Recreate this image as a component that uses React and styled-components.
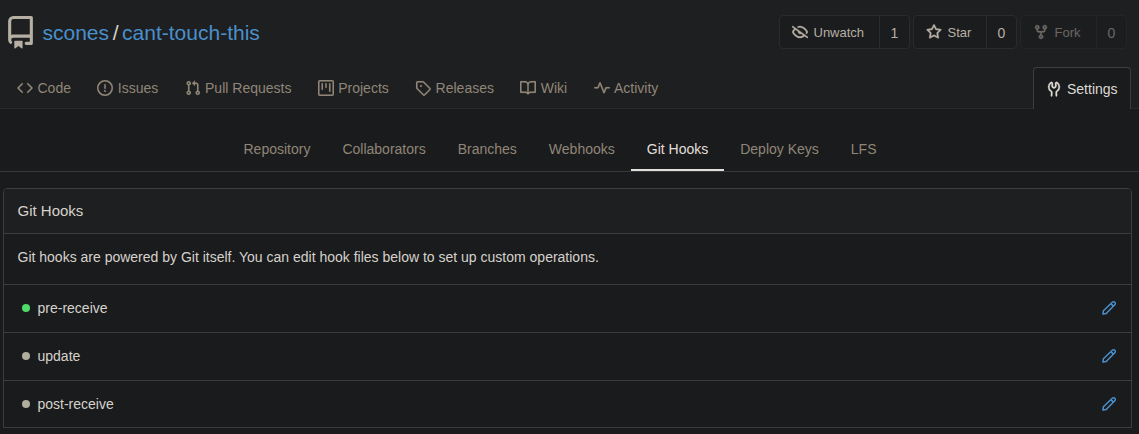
import React from 'react';
import styled, { createGlobalStyle } from 'styled-components';

const GlobalStyle = createGlobalStyle`
  * { box-sizing: border-box; }
  body {
    margin: 0;
    background: #1a1b1d;
    color: #d6d2cb;
    font-family: "Liberation Sans", Arial, sans-serif;
    font-size: 14px;
    line-height: 20px;
    overflow: hidden;
  }
`;

const paths = {
  repo: 'M2 2.5A2.5 2.5 0 014.5 0h8.75a.75.75 0 01.75.75v12.5a.75.75 0 01-.75.75h-2.5a.75.75 0 110-1.5h1.75v-2h-8a1 1 0 00-.714 1.7.75.75 0 01-1.072 1.05A2.495 2.495 0 012 11.5v-9zm10.5-1V9h-8c-.356 0-.694.074-1 .208V2.5a1 1 0 011-1h8zM5 12.25v3.25a.25.25 0 00.4.2l1.45-1.087a.25.25 0 01.3 0L8.6 15.7a.25.25 0 00.4-.2v-3.25a.25.25 0 00-.25-.25h-3.5a.25.25 0 00-.25.25z',
  code: 'M4.72 3.22a.75.75 0 011.06 1.06L2.06 8l3.72 3.72a.75.75 0 11-1.06 1.06L.47 8.53a.75.75 0 010-1.06l4.25-4.25zm6.56 0a.75.75 0 10-1.06 1.06L13.94 8l-3.72 3.72a.75.75 0 101.06 1.06l4.25-4.25a.75.75 0 000-1.06l-4.25-4.25z',
  issue: 'M8 1.5a6.5 6.5 0 100 13 6.5 6.5 0 000-13zM0 8a8 8 0 1116 0A8 8 0 010 8zm9 3a1 1 0 11-2 0 1 1 0 012 0zm-.25-6.25a.75.75 0 00-1.5 0v3.5a.75.75 0 001.5 0v-3.5z',
  pull: 'M7.177 3.073L9.573.677A.25.25 0 0110 .854v4.792a.25.25 0 01-.427.177L7.177 3.427a.25.25 0 010-.354zM3.75 2.5a.75.75 0 100 1.5.75.75 0 000-1.5zm-2.25.75a2.25 2.25 0 113 2.122v5.256a2.251 2.251 0 11-1.5 0V5.372A2.25 2.25 0 011.5 3.25zM11 2.5h-1V4h1a1 1 0 011 1v5.628a2.251 2.251 0 101.5 0V5A2.5 2.5 0 0011 2.5zm1 10.25a.75.75 0 111.5 0 .75.75 0 01-1.5 0zM3.75 12a.75.75 0 100 1.5.75.75 0 000-1.5z',
  project: 'M1.75 0A1.75 1.75 0 000 1.75v12.5C0 15.216.784 16 1.75 16h12.5A1.75 1.75 0 0016 14.25V1.75A1.75 1.75 0 0014.25 0H1.75zM1.5 1.75a.25.25 0 01.25-.25h12.5a.25.25 0 01.25.25v12.5a.25.25 0 01-.25.25H1.75a.25.25 0 01-.25-.25V1.75zM11.75 3a.75.75 0 00-.75.75v7.5a.75.75 0 001.5 0v-7.5a.75.75 0 00-.75-.75zm-8.25.75a.75.75 0 011.5 0v5.5a.75.75 0 01-1.5 0v-5.5zM8 3a.75.75 0 00-.75.75v3.5a.75.75 0 001.5 0v-3.5A.75.75 0 008 3z',
  tag: 'M2.5 7.775V2.75a.25.25 0 01.25-.25h5.025a.25.25 0 01.177.073l6.25 6.25a.25.25 0 010 .354l-5.025 5.025a.25.25 0 01-.354 0l-6.25-6.25a.25.25 0 01-.073-.177zm-1.5 0V2.75C1 1.784 1.784 1 2.75 1h5.025c.464 0 .91.184 1.238.513l6.25 6.25a1.75 1.75 0 010 2.474l-5.026 5.026a1.75 1.75 0 01-2.474 0l-6.25-6.25A1.75 1.75 0 011 7.775zM6 5a1 1 0 100 2 1 1 0 000-2z',
  book: 'M0 1.75A.75.75 0 01.75 1h4.253c1.227 0 2.317.59 3 1.501A3.744 3.744 0 0111.006 1h4.245a.75.75 0 01.75.75v10.5a.75.75 0 01-.75.75h-4.507a2.25 2.25 0 00-1.591.659l-.622.621a.75.75 0 01-1.06 0l-.622-.621A2.25 2.25 0 005.258 13H.75a.75.75 0 01-.75-.75V1.75zm8.755 3a2.25 2.25 0 012.25-2.25H14.5v9h-3.757c-.71 0-1.4.201-1.992.572l.004-7.322zm-1.504 7.324l.004-5.073-.002-2.253A2.25 2.25 0 005.003 2.5H1.5v9h3.757a3.75 3.75 0 011.994.574z',
  pulse: 'M6 2a.75.75 0 01.696.471L10 10.731l1.304-3.26A.75.75 0 0112 7h3.25a.75.75 0 010 1.5h-2.742l-1.812 4.528a.75.75 0 01-1.392 0L6 4.77 4.696 8.03A.75.75 0 014 8.5H.75a.75.75 0 010-1.5h2.742l1.812-4.529A.75.75 0 016 2z',
  tools: 'M5.433 2.304A4.494 4.494 0 003.5 6c0 1.598.832 3.002 2.09 3.802.518.328.929.923.902 1.64v.008l-.164 3.337a.75.75 0 11-1.498-.073l.163-3.33c.002-.085-.05-.216-.207-.316A5.996 5.996 0 012 6a5.994 5.994 0 012.567-4.92 1.482 1.482 0 011.673-.04c.462.296.76.827.76 1.423v2.82c0 .082.041.16.11.206l.75.51a.25.25 0 00.28 0l.75-.51A.25.25 0 009 5.282V2.463c0-.596.298-1.127.76-1.423a1.482 1.482 0 011.673.04A5.994 5.994 0 0114 6a5.996 5.996 0 01-2.786 5.068c-.157.1-.209.23-.207.315l.163 3.33a.75.75 0 11-1.498.074l-.164-3.345c-.027-.717.384-1.312.902-1.64A4.496 4.496 0 0012.5 6a4.494 4.494 0 00-1.933-3.696c-.024.017-.067.067-.067.16v2.818a1.75 1.75 0 01-.767 1.448l-.75.51a1.75 1.75 0 01-1.966 0l-.75-.51A1.75 1.75 0 015.5 5.282V2.463c0-.092-.043-.142-.067-.159z',
  eyeClosed: 'M.143 2.31a.75.75 0 011.047-.167l14.5 10.5a.75.75 0 11-.88 1.214l-2.248-1.628C11.346 13.19 9.792 14 8 14c-1.981 0-3.67-.992-4.933-2.078C1.797 10.832.88 9.577.43 8.9a1.618 1.618 0 010-1.797c.353-.533.995-1.42 1.868-2.305L.31 3.357A.75.75 0 01.143 2.31zm3.386 3.378a14.21 14.21 0 00-1.85 2.244.12.12 0 00-.022.068c0 .021.006.045.022.068.412.621 1.242 1.75 2.366 2.717C5.175 11.758 6.527 12.5 8 12.5c1.195 0 2.31-.488 3.29-1.191L9.063 9.695A2 2 0 016.058 7.52l-2.53-1.832zM8 3.5c-.516 0-1.017.09-1.499.251a.75.75 0 11-.473-1.423A6.23 6.23 0 018 2c1.981 0 3.67.992 4.933 2.078 1.27 1.091 2.187 2.345 2.637 3.023a1.618 1.618 0 010 1.798c-.11.166-.248.365-.41.587a.75.75 0 11-1.21-.887c.148-.201.272-.382.371-.53a.12.12 0 000-.137c-.412-.621-1.242-1.75-2.366-2.717C10.825 4.242 9.473 3.5 8 3.5z',
  star: 'M8 .25a.75.75 0 01.673.418l1.882 3.815 4.21.612a.75.75 0 01.416 1.279l-3.046 2.97.719 4.192a.75.75 0 01-1.088.791L8 12.347l-3.766 1.98a.75.75 0 01-1.088-.79l.72-4.194L.818 6.374a.75.75 0 01.416-1.28l4.21-.611L7.327.668A.75.75 0 018 .25zm0 2.445L6.615 5.5a.75.75 0 01-.564.41l-3.097.45 2.24 2.184a.75.75 0 01.216.664l-.528 3.084 2.769-1.456a.75.75 0 01.698 0l2.77 1.456-.53-3.084a.75.75 0 01.216-.664l2.24-2.183-3.096-.45a.75.75 0 01-.564-.41L8 2.694v.001z',
  fork: 'M5 3.25a.75.75 0 11-1.5 0 .75.75 0 011.5 0zm0 2.122a2.25 2.25 0 10-1.5 0v.878A2.25 2.25 0 005.75 8.5h1.5v2.128a2.251 2.251 0 101.5 0V8.5h1.5a2.25 2.25 0 002.25-2.25v-.878a2.25 2.25 0 10-1.5 0v.878a.75.75 0 01-.75.75h-4.5A.75.75 0 015 6.25v-.878zm3.75 7.378a.75.75 0 11-1.5 0 .75.75 0 011.5 0zm3-8.75a.75.75 0 100-1.5.75.75 0 000 1.5z',
};

const Svg = styled.svg`
  display: block;
  flex: none;
  fill: currentColor;
  stroke: currentColor;
  stroke-width: ${(p) => p.$weight || 0};
`;
const Icon = ({ name, size = 16, weight }) => (
  <Svg width={size} height={size} viewBox="0 0 16 16" $weight={weight} aria-hidden="true">
    <path fillRule="evenodd" d={paths[name]} />
  </Svg>
);

const PencilSvg = styled.svg`
  display: block;
  fill: none;
  stroke: currentColor;
  stroke-width: 1.5;
  stroke-linejoin: round;
`;
const Pencil = () => (
  <PencilSvg width="16" height="16" viewBox="0 0 16 16" aria-hidden="true">
    <path d="M1.9 14.1l.5-3.3 8.9-8.6a1.75 1.75 0 012.5 0 1.75 1.75 0 010 2.5l-8.6 8.9zM9.9 3.6l2.5 2.5" />
  </PencilSvg>
);

const Header = styled.header`
  height: 109px;
  background: #1e1f21;
  border-bottom: 1px solid #292b2d;
  display: flex;
  flex-direction: column;
  justify-content: space-between;
`;
const TitleBar = styled.div`
  display: flex;
  justify-content: space-between;
  padding: 15px 12px 0 4px;
`;
const RepoTitle = styled.h1`
  display: flex;
  align-items: flex-end;
  margin: 0;
  height: 34px;
  font-size: 21px;
  font-weight: 400;
  line-height: 33px;
  color: #b6afa4;
`;
const RepoPath = styled.div`
  display: flex;
  gap: 3.6px;
  margin-left: 5.5px;
  color: #d6d2cb;
`;
const Link = styled.a`
  color: #4a90cb;
`;
const Actions = styled.div`
  display: flex;
  gap: 3px;
`;
const ActionGroup = styled.div`
  display: flex;
  height: 34px;
  width: ${(p) => p.$width}px;
  border: 1px solid #292b2d;
  border-radius: 4px;
  background: #1b1c1e;
  color: #b6afa4;
  opacity: ${(p) => (p.$disabled ? 0.5 : 1)};
`;
const ActionButton = styled.span`
  flex: 1;
  display: flex;
  align-items: center;
  gap: 5.5px;
  padding-left: 12px;
  font-size: 13px;
`;
const ActionLabel = styled.span`
  padding-top: 1px;
`;
const ActionCount = styled.span`
  width: 30px;
  padding-top: 1px;
  border-left: 1px solid #292b2d;
  display: flex;
  align-items: center;
  justify-content: center;
`;
const RepoNav = styled.nav`
  display: flex;
  align-items: flex-end;
  height: 42px;
  padding: 0 8px 0 17px;
  margin-bottom: -1px;
`;
const RepoTab = styled.a`
  display: flex;
  align-items: center;
  gap: 4.5px;
  height: 42px;
  margin-right: 26.3px;
  color: #908677;
`;
const SettingsTab = styled(RepoTab)`
  margin: 0 0 0 auto;
  width: 98px;
  padding: 0 0 0 12px;
  gap: 5px;
  border: 1px solid #3b3d40;
  border-bottom: 0;
  border-radius: 4px 4px 0 0;
  background: #1a1b1d;
  color: #dddad4;
`;
const SubNav = styled.nav`
  display: flex;
  justify-content: center;
  height: 63px;
  padding-top: 21px;
  padding-right: 19px;
  border-bottom: 1px solid #36383b;
`;
const SubTab = styled.a`
  height: 41px;
  padding: 9px 16px;
  color: ${(p) => (p.$active ? '#e2dfda' : '#908677')};
  border-bottom: 2px solid ${(p) => (p.$active ? '#e2dfda' : 'transparent')};
`;
const Panel = styled.section`
  width: 1129px;
  margin: 16px 0 0 3px;
  border: 1px solid #3b3d40;
  border-radius: 4px 4px 0 0;
`;
const PanelHeader = styled.h2`
  margin: 0;
  height: 44px;
  padding: 0 13.5px;
  font-size: 15px;
  font-weight: 400;
  line-height: 44px;
  background: #1e1f21;
  border-radius: 3px 3px 0 0;
`;
const Description = styled.p`
  margin: 0;
  height: 51px;
  padding: 13px 13.5px;
  border-top: 1px solid #3b3d40;
`;
const HookRow = styled.div`
  display: flex;
  align-items: center;
  padding: 13px 14px 14px 18px;
  border-top: 1px solid #3b3d40;
  &:last-child {
    padding-bottom: 13px;
  }
`;
const Dot = styled.span`
  width: 8px;
  height: 8px;
  border-radius: 50%;
  margin-right: 7.5px;
  background: ${(p) => (p.$active ? '#4fdc6b' : '#b3aca0')};
`;
const EditLink = styled(Link)`
  margin-left: auto;
`;

const tabs = [
  ['code', 'Code'],
  ['issue', 'Issues'],
  ['pull', 'Pull Requests'],
  ['project', 'Projects'],
  ['tag', 'Releases'],
  ['book', 'Wiki'],
  ['pulse', 'Activity'],
];
const actions = [
  { icon: 'eyeClosed', label: 'Unwatch', count: 1, width: 131 },
  { icon: 'star', label: 'Star', count: 0, width: 104 },
  { icon: 'fork', label: 'Fork', count: 0, width: 107, disabled: true },
];
const settings = ['Repository', 'Collaborators', 'Branches', 'Webhooks', 'Git Hooks', 'Deploy Keys', 'LFS'];
const hooks = [
  { name: 'pre-receive', active: true },
  { name: 'update' },
  { name: 'post-receive' },
];

export default function App() {
  return (
    <>
      <GlobalStyle />
      <Header>
        <TitleBar>
          <RepoTitle>
            <Icon name="repo" size={33} />
            <RepoPath>
              <Link>scones</Link>
              <span>/</span>
              <Link>cant-touch-this</Link>
            </RepoPath>
          </RepoTitle>
          <Actions>
            {actions.map((a) => (
              <ActionGroup key={a.label} $width={a.width} $disabled={a.disabled}>
                <ActionButton>
                  <Icon name={a.icon} weight={0.3} />
                  <ActionLabel>{a.label}</ActionLabel>
                </ActionButton>
                <ActionCount>{a.count}</ActionCount>
              </ActionGroup>
            ))}
          </Actions>
        </TitleBar>
        <RepoNav>
          {tabs.map(([icon, label]) => (
            <RepoTab key={label}>
              <Icon name={icon} weight={0.15} />
              {label}
            </RepoTab>
          ))}
          <SettingsTab>
            <Icon name="tools" weight={0.3} />
            Settings
          </SettingsTab>
        </RepoNav>
      </Header>
      <SubNav>
        {settings.map((label) => (
          <SubTab key={label} $active={label === 'Git Hooks'}>
            {label}
          </SubTab>
        ))}
      </SubNav>
      <Panel>
        <PanelHeader>Git Hooks</PanelHeader>
        <Description>
          Git hooks are powered by Git itself. You can edit hook files below to set up custom operations.
        </Description>
        {hooks.map((hook) => (
          <HookRow key={hook.name}>
            <Dot $active={hook.active} />
            {hook.name}
            <EditLink>
              <Pencil />
            </EditLink>
          </HookRow>
        ))}
      </Panel>
    </>
  );
}
